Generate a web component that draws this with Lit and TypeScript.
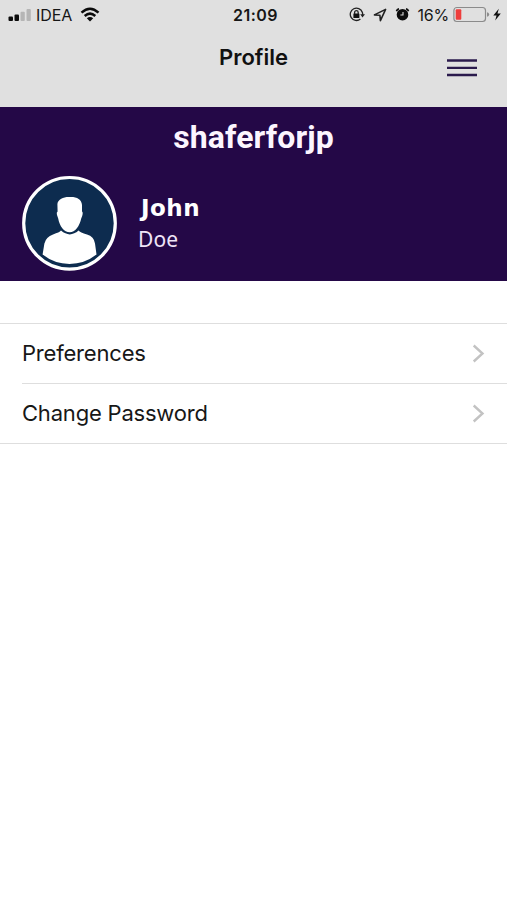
import { LitElement, html, css } from "lit";
import { customElement } from "lit/decorators.js";

@customElement("status-bar")
class StatusBar extends LitElement {
  static styles = css`
    :host { display: grid; grid-template-columns: 1fr auto 1fr; align-items: start; height: 30px; padding: 0 6px 0 8px; font: 400 16px/30px Inter, sans-serif; color: #161616; }
    .left, .right { display: flex; align-items: center; height: 29px; }
    .right { justify-content: flex-end; }
    .signal { margin-right: 5px; }
    .carrier { letter-spacing: -0.1px; margin-right: 8px; }
    .carrier, .percent { padding-top: 1px; }
    .time { font-weight: 600; letter-spacing: 0.5px; padding-left: 2px; }
    .lock { margin-right: 8px; }
    .arrow { margin-right: 8px; }
    .alarm { margin-right: 7px; }
    .percent { margin-right: 4px; letter-spacing: -0.2px; }
    .battery { margin-right: 3px; }
    svg { display: block; flex: none; }
  `;
  render() {
    return html`
      <div class="left">
        <svg class="signal" width="23" height="14" viewBox="0 0 23 14">
          <rect x="0.5" y="8.5" width="4.5" height="4.5" rx="1" fill="#0b0b0b"/>
          <rect x="6.5" y="6.5" width="4.5" height="6.5" rx="1" fill="#0b0b0b"/>
          <rect x="12.5" y="3.8" width="4.3" height="9.2" rx="1" fill="#b5b5b5"/>
          <rect x="18.5" y="1" width="4.3" height="12" rx="1" fill="#b5b5b5"/>
        </svg>
        <span class="carrier">IDEA</span>
        <svg width="20" height="15" viewBox="0 0 20 15" fill="none" stroke="#0b0b0b" stroke-width="2.5">
          <path d="M1.5 5.6Q10 -2.2 18.5 5.6M4.7 9Q10 4.2 15.3 9"/>
          <path d="M6.8 11.2Q10 8.6 13.2 11.2L10 14.4Z" fill="#0b0b0b" stroke="none"/>
        </svg>
      </div>
      <span class="time">21:09</span>
      <div class="right">
        <svg class="lock" width="16" height="15" viewBox="0 0 16 15" fill="none" stroke="#222" stroke-width="1.3">
          <path d="M13.3 5.2A6.2 6.2 0 1 0 11.4 12.1M13.3 5.2Q13.8 6.6 13.6 8"/>
          <path d="M11.2 7.3H16L13.5 10.4Z" fill="#222" stroke="none"/>
          <rect x="4.4" y="6.6" width="6" height="4.3" rx=".5" fill="#111" stroke="none"/>
          <path d="M5.6 7V5.5A1.8 1.8 0 0 1 9.2 5.5V7"/>
        </svg>
        <svg class="arrow" width="14" height="14" viewBox="0 0 14 14" fill="none" stroke="#222" stroke-width="1.6" stroke-linejoin="round">
          <path d="M12.6 1.4L1.4 6.9L6.9 7.2L7.4 12.6Z"/>
        </svg>
        <svg class="alarm" width="15" height="15" viewBox="0 0 15 15" fill="none" stroke="#0b0b0b">
          <circle cx="7.5" cy="7.7" r="5.8" fill="#0b0b0b" stroke="none"/>
          <path d="M1.5 4.2Q2 2.4 4 1.8M13.5 4.2Q13 2.4 11 1.8" stroke-width="1.7"/>
          <path d="M8 4.9V8H5.4" stroke="#d8d8d8" stroke-width="1.1"/>
        </svg>
        <span class="percent">16%</span>
        <svg class="battery" width="37" height="17" viewBox="0 0 37 17">
          <rect x="0.9" y="1.5" width="31.6" height="14" rx="3" fill="none" stroke="#8b8b8b" stroke-width="1.2"/>
          <rect x="2.7" y="3.3" width="5.6" height="10.4" rx="1" fill="#ee3e3c"/>
          <path d="M34 6.3Q36.2 6.7 36.2 8.5Q36.2 10.3 34 10.7Z" fill="#8b8b8b"/>
        </svg>
        <svg width="8" height="14" viewBox="0 0 8 14"><path d="M5.8 0.8L0.3 7.4H3.5L2.2 12.5L7.8 5.5H4.5Z" fill="#111"/></svg>
      </div>
    `;
  }
}

@customElement("app-root")
class AppRoot extends LitElement {
  static styles = css`
    :host { display: block; width: 100%; height: 900px; background: #fff; overflow: hidden; }
    * { box-sizing: border-box; }
    header { height: 107px; background: #e0e0e0; }
    .nav { display: grid; grid-template-columns: 1fr auto 1fr; padding-right: 30px; padding-left: 30px; }
    h1 { grid-column: 2; margin: 12px 0 0; font: 600 22px/30px Inter, sans-serif; letter-spacing: 0; color: #111; }
    .menu { grid-column: 3; justify-self: end; width: 30px; margin-top: 29px; }
    .menu svg { display: block; }
    .hero { height: 174px; background: #240847; color: #fff; padding-top: 12px; }
    h2 { margin: 0; text-align: center; font: 700 32px/36px Roboto, sans-serif; letter-spacing: 0.1px; color: #fcf5ff; }
    .user { display: flex; padding: 20px 0 0 21px; }
    .avatar { display: block; width: 97px; height: 97px; }
    .names { display: flex; flex-direction: column; padding: 17px 0 0 20px; }
    .first { font: 700 23px/32px "DejaVu Sans", sans-serif; letter-spacing: 0.5px; margin-left: 3px; }
    .last { font: 400 21px/30px "Noto Sans", sans-serif; letter-spacing: 0.1px; color: #efe4f7; }
    .list { margin-top: 42px; border-top: 1px solid #dedede; border-bottom: 1px solid #dedede; padding-left: 22px; font: 400 22px/59px Inter, sans-serif; color: #171717; }
    .row { display: flex; align-items: center; justify-content: space-between; height: 59px; padding-right: 22px; letter-spacing: -0.2px; }
    .row + .row { border-top: 1px solid #dedede; height: 60px; }
  `;
  render() {
    const chevron = html`<svg width="13" height="20" viewBox="0 0 13 20"><path d="M1.7 1.5L10.5 9.5L1.7 17.5" fill="none" stroke="#c3c3c3" stroke-width="2.4"/></svg>`;
    return html`
      <header>
        <status-bar></status-bar>
        <div class="nav">
          <h1>Profile</h1>
          <div class="menu">
            <svg width="30" height="18" viewBox="0 0 30 18" stroke="#2a1a4c" stroke-width="2.3"><path d="M0 1.5H30M0 8.8H30M0 16H30"/></svg>
          </div>
        </div>
      </header>
      <section class="hero">
        <h2>shaferforjp</h2>
        <div class="user">
          <svg class="avatar" viewBox="0 0 97 97">
            <circle cx="48.5" cy="48.3" r="45.8" fill="#0d2c4f" stroke="#fff" stroke-width="3.2"/>
            <path d="M36.4 29C37 24 43 21.7 48.5 22C55 21.5 60.8 24 61 30V36.5Q62.3 37 61.2 41L60.2 43.5C58.7 51 54 57.3 48.8 57.3C43 57.3 38.5 51 37.2 43.5L36 40Q35.2 37 36.6 36.5Z" fill="#fff"/>
            <path d="M40 55.6Q48.8 63.2 57.6 55.6Q59 57.6 66 59.5Q73 61.5 74 68.5L75.5 79.6Q63.5 89 48.5 89Q33.5 89 21.6 79.6L23.4 68.5Q25 61.8 32 59.5Q38.5 57.4 40 55.6Z" fill="#fff"/>
          </svg>
          <div class="names"><span class="first">John</span><span class="last">Doe</span></div>
        </div>
      </section>
      <section class="list">
        <div class="row"><span>Preferences</span>${chevron}</div>
        <div class="row"><span>Change Password</span>${chevron}</div>
      </section>
    `;
  }
}
